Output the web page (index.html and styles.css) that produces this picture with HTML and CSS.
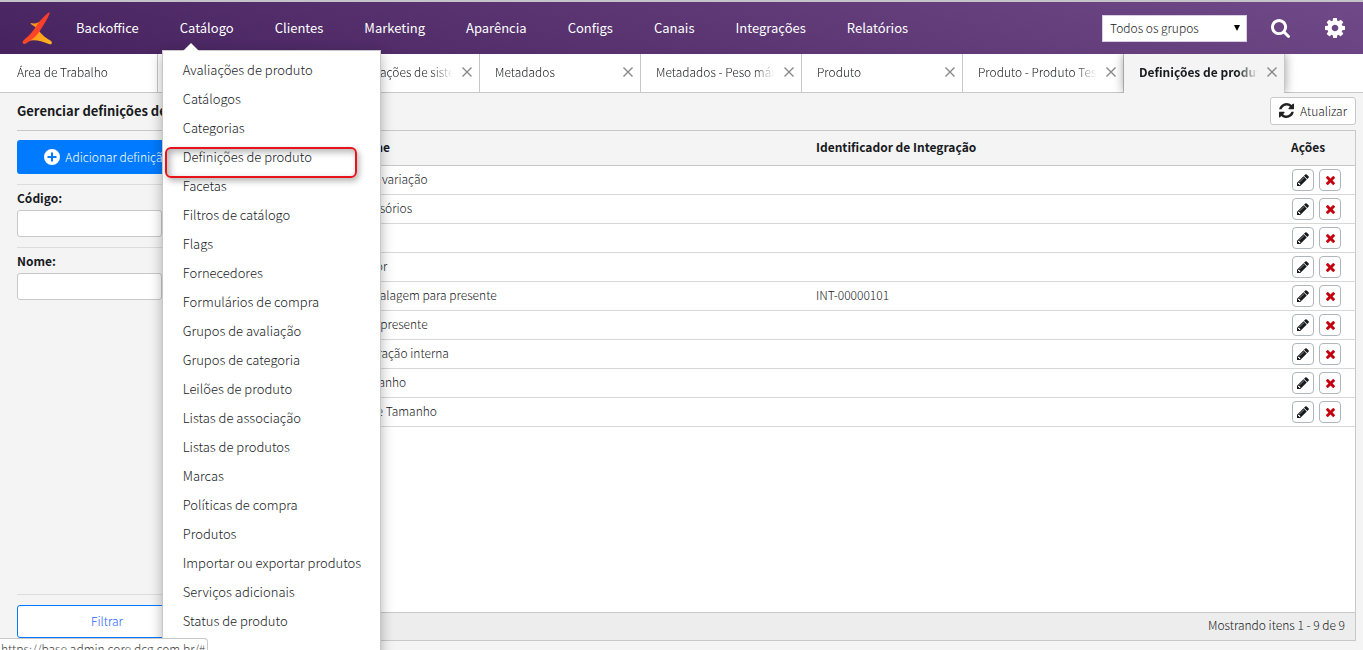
FILE: index.html
```
<!DOCTYPE html>
<html lang="pt">
<head>
    <meta charset="UTF-8">
    <meta name="viewport" content="width=device-width, initial-scale=1.0">
    <title>Definições de produto - Backoffice</title>
    <link rel="stylesheet" href="styles.css">
</head>
<body>
    <!-- Icons -->
    <svg class="sprite" aria-hidden="true">
        <symbol id="icon-search" viewBox="0 128 1664 1664"><path d="M1152 832q0-185-131.500-316.500t-316.500-131.500-316.500 131.500-131.500 316.500 131.500 316.500 316.500 131.500 316.500-131.500 131.500-316.500zm512 832q0 52-38 90t-90 38q-54 0-90-38l-343-342q-179 124-399 124-143 0-273.500-55.500t-225-150-150-225-55.500-273.500 55.500-273.500 150-225 225-150 273.500-55.500 273.500 55.500 225 150 150 225 55.500 273.500q0 220-124 399l343 343q37 37 37 90z"/></symbol>
        <symbol id="icon-cog" viewBox="128 128 1536 1536"><path d="M1152 896q0-106-75-181t-181-75-181 75-75 181 75 181 181 75 181-75 75-181zm512-109v222q0 12-8 23t-20 13l-185 28q-19 54-39 91 35 50 107 138 10 12 10 25t-9 23q-27 37-99 108t-94 71q-12 0-26-9l-138-108q-44 23-91 38-16 136-29 186-7 28-36 28h-222q-14 0-24.500-8.500t-11.500-21.500l-28-184q-49-16-90-37l-141 107q-10 9-25 9-14 0-25-11-126-114-165-168-7-10-7-23 0-12 8-23 15-21 51-66.500t54-70.500q-27-50-41-99l-183-27q-13-2-21-12.500t-8-23.500v-222q0-12 8-23t19-13l186-28q14-46 39-92-40-57-107-138-10-12-10-24 0-10 9-23 26-36 98.500-107.500t94.500-71.500q13 0 26 10l138 107q44-23 91-38 16-136 29-186 7-28 36-28h222q14 0 24.500 8.500t11.500 21.500l28 184q49 16 90 37l142-107q9-9 24-9 13 0 25 10 129 119 165 170 7 8 7 22 0 12-8 23-15 21-51 66.500t-54 70.500q26 50 41 98l183 28q13 2 21 12.500t8 23.500z"/></symbol>
        <symbol id="icon-refresh" viewBox="128 128 1536 1536"><path d="M1639 1056q0 5-1 7-64 268-268 434.500t-478 166.500q-146 0-282.500-55t-243.500-157l-129 129q-19 19-45 19t-45-19-19-45v-448q0-26 19-45t45-19h448q26 0 45 19t19 45-19 45l-137 137q71 66 161 102t187 36q134 0 250-65t186-179q11-17 53-117 8-23 30-23h192q13 0 22.500 9.500t9.500 22.500zm25-800v448q0 26-19 45t-45 19h-448q-26 0-45-19t-19-45 19-45l138-138q-148-137-349-137-134 0-250 65t-186 179q-11 17-53 117-8 23-30 23h-199q-13 0-22.500-9.500t-9.500-22.500v-7q65-268 270-434.500t480-166.500q146 0 284 55.500t245 156.500l130-129q19-19 45-19t45 19 19 45z"/></symbol>
        <symbol id="icon-pencil" viewBox="128 128 1536 1536"><path d="M491 1536l91-91-235-235-91 91v107h128v128h107zm523-928q0-22-22-22-10 0-17 7l-542 542q-7 7-7 17 0 22 22 22 10 0 17-7l542-542q7-7 7-17zm-54-192l416 416-832 832h-416v-416zm683 96q0 53-37 90l-166 166-416-416 166-165q36-38 90-38 53 0 91 38l235 234q37 39 37 91z"/></symbol>
        <symbol id="icon-times" viewBox="302 366 1188 1188"><path d="M1490 1322q0 40-28 68l-136 136q-28 28-68 28t-68-28l-294-294-294 294q-28 28-68 28t-68-28l-136-136q-28-28-28-68t28-68l294-294-294-294q-28-28-28-68t28-68l136-136q28-28 68-28t68 28l294 294 294-294q28-28 68-28t68 28l136 136q28 28 28 68t-28 68l-294 294 294 294q28 28 28 68z"/></symbol>
        <symbol id="icon-close" viewBox="0 0 10 10"><path d="M0.500 0.500l9 9M9.500 0.500l-9 9" fill="none" stroke="currentColor" stroke-width="1.400"/></symbol>
        <symbol id="icon-plus" viewBox="0 0 16 16"><path fill-rule="evenodd" d="M8 0a8 8 0 1 1 0 16a8 8 0 0 1 0-16zM7 3.500v3.500h-3.500v2h3.500v3.500h2v-3.500h3.500v-2h-3.500v-3.500z"/></symbol>
    </svg>

    <header class="topbar">
        <a class="logo" href="#" aria-label="Início">
            <svg width="30" height="34" viewBox="0 0 30 34">
                <defs>
                    <linearGradient id="logo-red" x1="1" y1="0" x2="0" y2="1">
                        <stop offset="0" stop-color="#fb3b2c"/>
                        <stop offset="1" stop-color="#ff4a22"/>
                    </linearGradient>
                    <linearGradient id="logo-orange" x1="0" y1="0" x2="1" y2="1">
                        <stop offset="0" stop-color="#ff8a1c"/>
                        <stop offset="1" stop-color="#ffb41f"/>
                    </linearGradient>
                </defs>
                <path fill="url(#logo-orange)" d="M9 12c4 1 8 0 11-3l-3 11c3 4 7 7 12 10c2 2 0 4-2 3c-8-3-14-5-21-3l9-12c-1-2-3-3-5-4c-1-1-2-2-1-2z"/>
                <path fill="url(#logo-red)" d="M26 2c2-1 2 0 1 2c-2 5-5 9-8 14c-4 7-9 11-16 15c-2 0-3-1-2-3c3-3 8-7 12-13c3-5 7-10 13-15z"/>
            </svg>
        </a>
        <nav class="nav">
            <a href="#">Backoffice</a>
            <div class="nav-item">
                <a href="#">Catálogo</a>
                <ul class="menu">
                    <li><a href="#">Avaliações de produto</a></li>
                    <li><a href="#">Catálogos</a></li>
                    <li><a href="#">Categorias</a></li>
                    <li class="marked"><a href="#">Definições de produto</a></li>
                    <li><a href="#">Facetas</a></li>
                    <li><a href="#">Filtros de catálogo</a></li>
                    <li><a href="#">Flags</a></li>
                    <li><a href="#">Fornecedores</a></li>
                    <li><a href="#">Formulários de compra</a></li>
                    <li><a href="#">Grupos de avaliação</a></li>
                    <li><a href="#">Grupos de categoria</a></li>
                    <li><a href="#">Leilões de produto</a></li>
                    <li><a href="#">Listas de associação</a></li>
                    <li><a href="#">Listas de produtos</a></li>
                    <li><a href="#">Marcas</a></li>
                    <li><a href="#">Políticas de compra</a></li>
                    <li><a href="#">Produtos</a></li>
                    <li><a href="#">Importar ou exportar produtos</a></li>
                    <li><a href="#">Serviços adicionais</a></li>
                    <li><a href="#">Status de produto</a></li>
                </ul>
            </div>
            <a href="#">Clientes</a>
            <a href="#">Marketing</a>
            <a href="#">Aparência</a>
            <a href="#">Configs</a>
            <a href="#">Canais</a>
            <a href="#">Integrações</a>
            <a href="#">Relatórios</a>
        </nav>
        <div class="tools">
            <select class="group-select" aria-label="Grupo">
                <option>Todos os grupos</option>
            </select>
            <button class="tool" aria-label="Buscar"><svg width="19" height="19"><use href="#icon-search"/></svg></button>
            <button class="tool" aria-label="Configurações"><svg width="20" height="20"><use href="#icon-cog"/></svg></button>
        </div>
    </header>

    <div class="tabs">
        <div class="tab home"><a href="#">Área de Trabalho</a></div>
        <div class="tab"><a href="#">Catálogo</a><button aria-label="Fechar"><svg width="10" height="10"><use href="#icon-close"/></svg></button></div>
        <div class="tab"><a href="#">Configurações de sistema</a><button aria-label="Fechar"><svg width="10" height="10"><use href="#icon-close"/></svg></button></div>
        <div class="tab"><a href="#">Metadados</a><button aria-label="Fechar"><svg width="10" height="10"><use href="#icon-close"/></svg></button></div>
        <div class="tab"><a href="#">Metadados - Peso máximo</a><button aria-label="Fechar"><svg width="10" height="10"><use href="#icon-close"/></svg></button></div>
        <div class="tab"><a href="#">Produto</a><button aria-label="Fechar"><svg width="10" height="10"><use href="#icon-close"/></svg></button></div>
        <div class="tab"><a href="#">Produto - Produto Teste</a><button aria-label="Fechar"><svg width="10" height="10"><use href="#icon-close"/></svg></button></div>
        <div class="tab active"><a href="#">Definições de produto</a><button aria-label="Fechar"><svg width="10" height="10"><use href="#icon-close"/></svg></button></div>
    </div>

    <div class="page-head">
        <h1>Gerenciar definições de produto</h1>
        <button class="refresh"><svg width="15" height="15"><use href="#icon-refresh"/></svg>Atualizar</button>
    </div>

    <div class="content">
        <form class="filters">
            <button type="button" class="add"><svg width="16" height="16"><use href="#icon-plus"/></svg>Adicionar definição</button>
            <div class="field">
                <label for="codigo">Código:</label>
                <input type="text" id="codigo">
            </div>
            <div class="field">
                <label for="nome">Nome:</label>
                <input type="text" id="nome">
            </div>
            <div class="filter-foot">
                <button type="button" class="filter">Filtrar</button>
            </div>
        </form>

        <main class="grid">
            <table>
                <thead>
                    <tr><th class="col-code">Código</th><th class="col-name">Nome</th><th>Identificador de Integração</th><th class="col-actions">Ações</th></tr>
                </thead>
                <tbody id="rows"></tbody>
            </table>
            <div class="grid-foot">Mostrando itens 1 - 9 de 9</div>
        </main>
    </div>

    <div class="status">https://base.admin.core.dcg.com.br/#</div>

    <script>
        const items = [
            ["Sem variação", ""],
            ["Acessórios", ""],
            ["Cor", ""],
            ["Sabor", ""],
            ["Embalagem para presente", "INT-00000101"],
            ["Vale presente", ""],
            ["Operação interna", ""],
            ["Tamanho", ""],
            ["Cor e Tamanho", ""]
        ];

        document.getElementById("rows").innerHTML = items.map(([name, code], i) => `
            <tr>
                <td>${i + 1}</td>
                <td>${name}</td>
                <td>${code}</td>
                <td class="cell-actions">
                    <div class="actions">
                        <button aria-label="Editar ${name}"><svg width="12" height="12"><use href="#icon-pencil"/></svg></button>
                        <button class="delete" aria-label="Excluir ${name}"><svg width="9" height="9"><use href="#icon-times"/></svg></button>
                    </div>
                </td>
            </tr>`).join("");
    </script>
</body>
</html>
```
FILE: styles.css
```
* {
    box-sizing: border-box;
}

body {
    margin: 0;
    height: 100vh;
    display: flex;
    flex-direction: column;
    overflow: hidden;
    background-color: #f4f4f4;
    color: #181b1e;
    font-family: "Noto Sans CJK SC", "Noto Sans", sans-serif;
    font-size: 12px;
    font-weight: 300;
    line-height: 20px;
}

a {
    color: inherit;
    text-decoration: none;
}

button,
input,
select {
    font: inherit;
    color: inherit;
}

button {
    padding: 0;
    border: none;
    background: none;
    cursor: pointer;
}

svg {
    display: block;
    fill: currentColor;
    flex: none;
}

.sprite {
    position: absolute;
    width: 0;
    height: 0;
}

/* Top bar */
.topbar {
    display: flex;
    align-items: center;
    flex: none;
    height: 54px;
    padding: 0 18px 0 22px;
    border-top: 2px solid #c4c4c8;
    background: linear-gradient(15deg, #46225e, #704a88);
    color: white;
}

.nav {
    display: flex;
    gap: 41px;
    margin-left: 24px;
    font-size: 13px;
    font-weight: 400;
}

.nav-item {
    position: relative;
}

.tools {
    display: flex;
    align-items: center;
    margin-left: auto;
}

.group-select {
    appearance: none;
    width: 145px;
    height: 27px;
    padding: 0 7px;
    border: 1px solid #d8cfe0;
    border-radius: 0;
    background: white url("data:image/svg+xml,%3Csvg xmlns='http://www.w3.org/2000/svg' width='6' height='6'%3E%3Cpath d='M0 0h6L3 6z'/%3E%3C/svg%3E") no-repeat right 6px center;
    color: #222;
}

.tool {
    margin-left: 24px;
}

.tool + .tool {
    margin-left: 35px;
}

/* Drop-down menu */
.menu {
    position: absolute;
    top: 32px;
    left: -18px;
    z-index: 10;
    width: 219px;
    height: 620px;
    margin: 0;
    padding: 4px 0;
    list-style: none;
    border: 1px solid #c8c8c8;
    background-color: white;
    box-shadow: 0 4px 12px rgba(0, 0, 0, 0.3);
    color: #181b1e;
    font-weight: 300;
}

.menu::before {
    content: "";
    position: absolute;
    top: -8px;
    left: 20px;
    border: 8px solid transparent;
    border-top: none;
    border-bottom-color: white;
}

.menu li {
    position: relative;
    padding: 0 20px;
    line-height: 29px;
    white-space: nowrap;
}

.marked::after {
    content: "";
    position: absolute;
    top: 5px;
    left: 2px;
    width: 188px;
    height: 27px;
    border: 2px solid #e8131a;
    border-radius: 6px;
    box-shadow: 2px 3px 6px rgba(0, 0, 0, 0.3), inset 3px 3px 7px rgba(0, 0, 0, 0.3);
}

/* Tabs */
.tabs {
    display: flex;
    flex: none;
    height: 39px;
    border-bottom: 1px solid #c8c8c8;
    background-color: white;
}

.tab {
    display: flex;
    align-items: center;
    width: 161px;
    height: 38px;
    padding: 0 7px 3px 15px;
    border-right: 1px solid #c8c8c8;
}

.tab.home {
    width: 158px;
    padding-left: 17px;
}

.tab a {
    flex: 1;
    overflow: hidden;
    white-space: nowrap;
    mask-image: linear-gradient(to right, black 98px, transparent 119px);
}

.tab button {
    margin-left: 8px;
    color: #888;
}

.tab.active {
    height: 39px;
    background-color: #f4f4f4;
    box-shadow: 0 0 10px rgba(0, 0, 0, 0.4);
    clip-path: inset(0 -12px 0 -12px);
    font-weight: 700;
}

/* Page */
.page-head {
    display: flex;
    align-items: center;
    justify-content: space-between;
    flex: none;
    height: 37px;
    padding: 0 7px 2px 17px;
}

h1 {
    margin: 0;
    font-size: 13px;
    font-weight: 700;
}

.refresh {
    display: flex;
    align-items: center;
    gap: 6px;
    height: 28px;
    padding: 0 8px;
    border: 1px solid #c8c8c8;
    border-radius: 3px;
    background-color: white;
    color: #222;
}

.content {
    display: flex;
    flex: 1;
    min-height: 0;
    padding: 0 7px 9px 17px;
}

.filters {
    display: flex;
    flex-direction: column;
    width: 196px;
    padding-top: 9px;
    border-top: 1px solid #c8c8c8;
}

.add {
    display: flex;
    align-items: center;
    justify-content: center;
    gap: 5px;
    width: 180px;
    height: 34px;
    margin-bottom: 10px;
    border-radius: 3px;
    background-color: #007bff;
    color: white;
}

.field {
    height: 63px;
    padding-top: 3px;
    border-top: 1px solid #dcdcdc;
}

.field label {
    display: block;
    font-weight: 700;
}

.field input {
    display: block;
    width: 145px;
    height: 27px;
    margin-top: 2px;
    border: 1px solid #c8c8c8;
    border-radius: 3px;
    background-color: white;
}

.filter-foot {
    margin-top: auto;
    padding: 10px 0 3px;
    border-top: 1px solid #dcdcdc;
}

.filter {
    width: 180px;
    height: 33px;
    padding-bottom: 2px;
    border: 1px solid #007bff;
    border-radius: 3px;
    background-color: white;
    color: #1f66ff;
}

.grid {
    display: flex;
    flex-direction: column;
    flex: 1;
    border: 1px solid #c8c8c8;
    background-color: white;
}

table {
    width: 100%;
    border-collapse: separate;
    border-spacing: 0;
    table-layout: fixed;
}

th {
    height: 35px;
    padding: 0 10px 2px;
    border-bottom: 1px solid #c8c8c8;
    background-color: #f4f4f4;
    font-weight: 700;
    text-align: left;
}

td {
    height: 29px;
    padding: 0 10px 2px;
    border-bottom: 1px solid #d8d8d8;
}

.col-code {
    width: 131px;
}

.col-name {
    width: 461px;
}

.col-actions {
    width: 74px;
}

.cell-actions {
    padding: 0 0 0 11px;
}

.actions {
    display: flex;
    gap: 5px;
}

.actions button {
    display: flex;
    align-items: center;
    justify-content: center;
    flex: none;
    width: 22px;
    height: 22px;
    border: 1px solid #b0b6bc;
    border-radius: 4px;
    background-color: white;
}

.actions .delete {
    color: #c4000f;
}

.grid-foot {
    margin-top: auto;
    height: 28px;
    padding: 2px 10px;
    border-top: 1px solid #c8c8c8;
    background-color: #ededed;
    text-align: right;
}

/* Link address in the corner */
.status {
    position: absolute;
    left: 0;
    bottom: 0;
    z-index: 20;
    width: 208px;
    height: 12px;
    padding-left: 1px;
    overflow: hidden;
    border: 1px solid #c8c8c8;
    border-width: 1px 1px 0 0;
    border-top-right-radius: 4px;
    background-color: white;
    color: #444;
    white-space: nowrap;
}
```
